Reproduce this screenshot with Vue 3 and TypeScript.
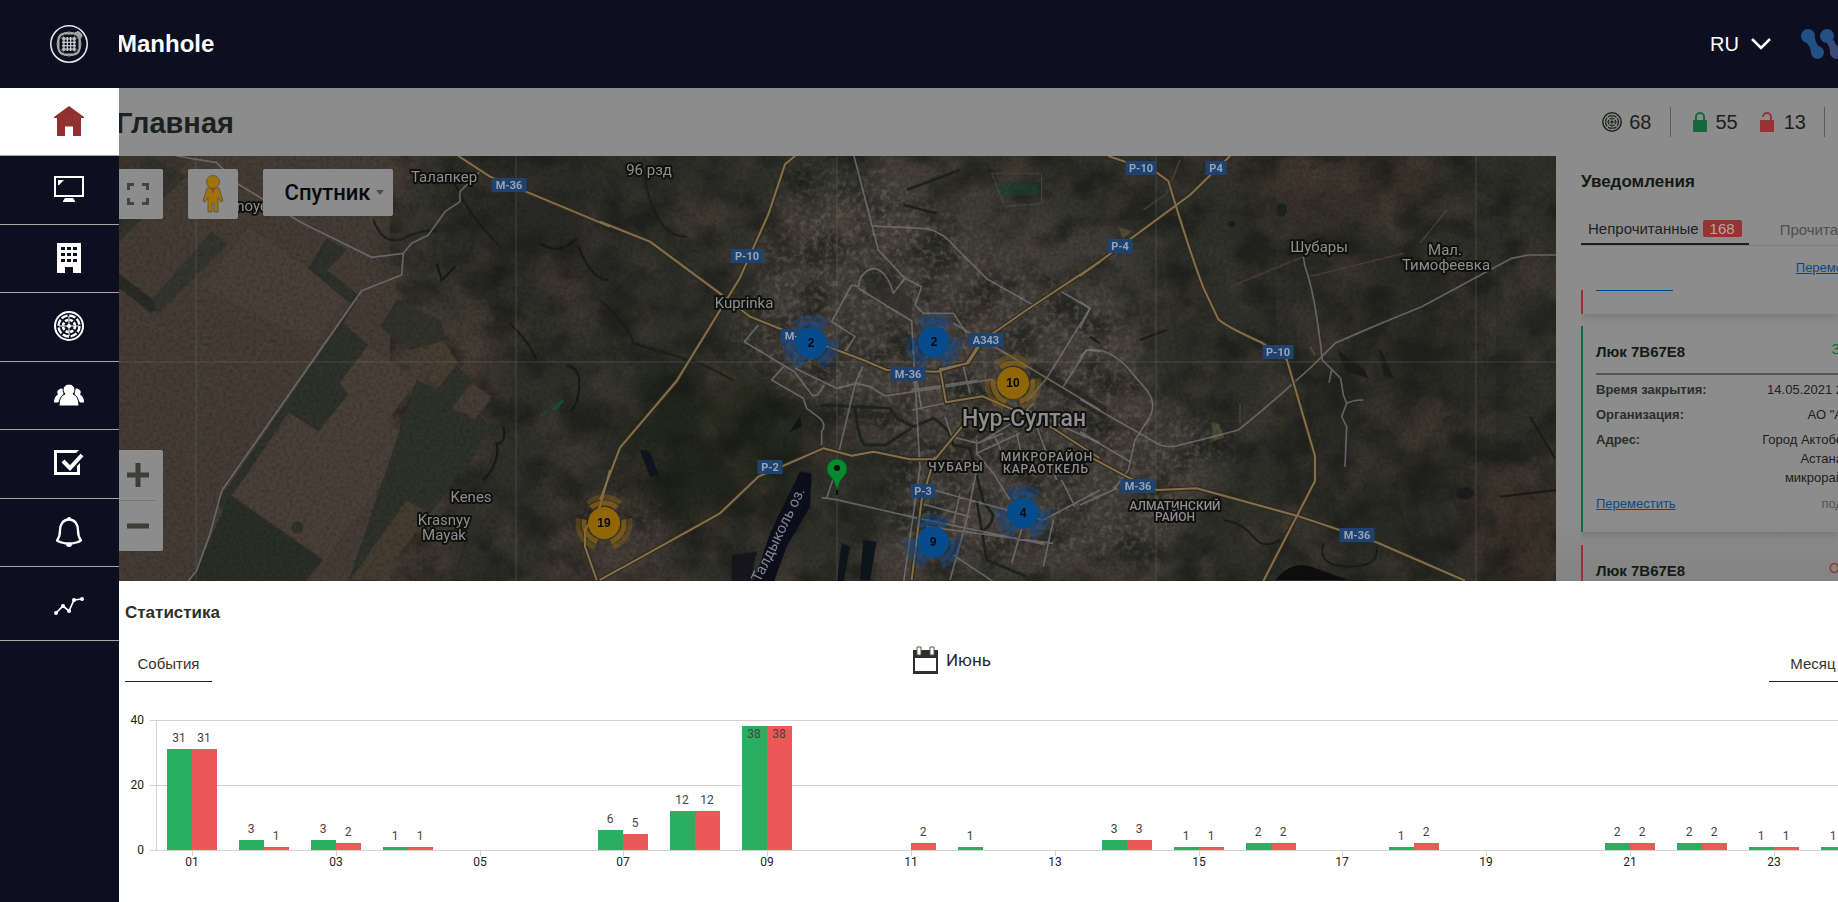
<script setup lang="ts">
interface Shield { x: number; y: number; w: number; t: string }
interface Label { x: number; y: number; t: string; k: string }
interface Cluster { x: number; y: number; n: number; c: string }

const menu: string[] = ['Главная', 'Мониторинг', 'Организации', 'Люки', 'Пользователи', 'Задачи', 'Уведомления', 'Аналитика']

const shields: Shield[] = [
  { x: 509, y: 185, w: 35, t: 'М-36' }, { x: 747, y: 256, w: 33, t: 'Р-10' },
  { x: 798, y: 336, w: 35, t: 'М-36' }, { x: 908, y: 374, w: 35, t: 'М-36' },
  { x: 986, y: 340, w: 35, t: 'А343' }, { x: 770, y: 467, w: 25, t: 'Р-2' },
  { x: 923, y: 491, w: 25, t: 'Р-3' }, { x: 1141, y: 168, w: 31, t: 'Р-10' },
  { x: 1216, y: 168, w: 21, t: 'Р4' }, { x: 1120, y: 246, w: 25, t: 'Р-4' },
  { x: 1278, y: 352, w: 31, t: 'Р-10' }, { x: 1138, y: 486, w: 35, t: 'М-36' },
  { x: 1357, y: 535, w: 35, t: 'М-36' },
]

const labels: Label[] = [
  { x: 444, y: 182, t: 'Талапкер', k: 'town' }, { x: 252, y: 211, t: 'noye', k: 'town' },
  { x: 649, y: 175, t: '96 рзд', k: 'town' }, { x: 744, y: 308, t: 'Kuprinka', k: 'town' },
  { x: 471, y: 502, t: 'Kenes', k: 'town' }, { x: 444, y: 525, t: 'Krasnyy', k: 'town' },
  { x: 444, y: 540, t: 'Mayak', k: 'town' }, { x: 1319, y: 252, t: 'Шубары', k: 'town' },
  { x: 1445, y: 255, t: 'Мал.', k: 'town' }, { x: 1446, y: 270, t: 'Тимофеевка', k: 'town' },
  { x: 1024, y: 426, t: 'Нур-Султан', k: 'city' }, { x: 956, y: 471, t: 'ЧУБАРЫ', k: 'area' },
  { x: 1047, y: 461, t: 'МИКРОРАЙОН', k: 'area' }, { x: 1046, y: 473, t: 'КАРАОТКЕЛЬ', k: 'area' },
  { x: 1175, y: 510, t: 'АЛМАТИНСКИЙ', k: 'area dense' }, { x: 1175, y: 521, t: 'РАЙОН', k: 'area dense' },
]

const clusters: Cluster[] = [
  { x: 811, y: 343, n: 2, c: 'blue' }, { x: 934, y: 342, n: 2, c: 'blue' },
  { x: 1013, y: 383, n: 10, c: 'gold' }, { x: 1023, y: 513, n: 4, c: 'blue' },
  { x: 933, y: 542, n: 9, c: 'blue' }, { x: 604, y: 523, n: 19, c: 'gold' },
]

/* [day, closed, opened] */
const days: [number, number, number][] = [
  [1, 31, 31], [2, 3, 1], [3, 3, 2], [4, 1, 1], [7, 6, 5], [8, 12, 12], [9, 38, 38], [11, 0, 2],
  [12, 1, 0], [14, 3, 3], [15, 1, 1], [16, 2, 2], [18, 1, 2], [21, 2, 2], [22, 2, 2], [23, 1, 1], [24, 1, 0],
]
const band = 72
const base = 140
const scale = 130 / 40
const centre = (d: number): number => 79 + Math.round((d - 1) * 71.9)
const bars = days.flatMap(([d, a, b]) => [
  { x: centre(d) - 25, v: a, c: 'closed' },
  { x: centre(d), v: b, c: 'opened' },
]).filter(o => o.v > 0).map(o => {
  const h = Math.round(o.v * scale)
  return { ...o, h, y: base - h, ty: o.v > 35 ? base - h + 12 : base - h - 7 }
})
const ticks = Array.from({ length: 12 }, (_, i) => ({ x: centre(i * 2 + 1), t: String(i * 2 + 1).padStart(2, '0') }))
const levels = [{ y: 10, t: 40 }, { y: 75, t: 20 }, { y: 140, t: 0 }]
const plotLeft = 79 - band / 2
</script>

<template>
  <div class="app">
    <aside class="side">
      <a class="brand" href="#" aria-label="Manhole">
        <svg width="40" height="40" viewBox="0 0 40 40" fill="none" stroke="#e4e4e4">
          <circle cx="20" cy="20" r="18.2" stroke-width="1.600" />
          <g stroke="#a9a9a6">
            <rect x="9.500" y="9.500" width="21" height="21" rx="6" stroke-width="2" />
            <circle cx="20" cy="20" r="12" stroke-width="1" />
            <path d="M26 8.500a6 6 0 0 1 6 6M28 7.500a7 7 0 0 1 5 5" stroke-width="1.500" />
            <path d="M9 14h22M9 26h22M14 9v22M26 9v22" stroke-width=".7" />
          </g>
          <path d="M13 15h14M13 18.300h14M13 21.700h14M13 25h14M15 13v14M18.300 13v14M21.700 13v14M25 13v14" stroke-width="1.100" />
        </svg>
      </a>
      <nav aria-label="Меню">
        <ul>
          <li v-for="(m, i) in menu" :key="m" :class="{ active: i === 0 }">
            <a href="#" :aria-label="m">
              <svg width="30" height="30" viewBox="0 0 30 30" fill="#fff">
                <g v-if="i === 0" fill="#8e2f30">
                  <path d="M15 0 30 11v1h-3v18h-8v-9.500h-8V30H3V12H0v-1z" />
                  <g fill="#e5484a"><circle v-for="k in 14" :key="k" :cx="5 + (k * 7) % 20" :cy="8 + (k * 5) % 12" r=".5" /><circle cx="6" cy="25" r=".5" /><circle cx="24" cy="25" r=".5" /></g>
                </g>
                <template v-else-if="i === 1">
                  <path fill-rule="evenodd" d="M0 2h30v21H0zM2 4v17h26V4z" />
                  <path d="M4 6h6l-5 5H4zM11 24h8l2 3v1H9v-1z" />
                </template>
                <path v-else-if="i === 2" fill-rule="evenodd" d="M3 0h24v30h-8v-6h-8v6H3zM7 4v3h4V4zm6 0v3h4V4zm6 0v3h4V4zM7 10v3h4v-3zm6 0v3h4v-3zm6 0v3h4v-3zM7 16v3h4v-3zm6 0v3h4v-3zm6 0v3h4v-3z" />
                <g v-else-if="i === 3" fill="none" stroke="#fff">
                  <circle cx="15" cy="15" r="14" stroke-width="2" />
                  <circle cx="15" cy="15" r="10.500" stroke-width="2.400" stroke-dasharray="6.500 1.740" />
                  <circle cx="15" cy="15" r="6" stroke-width="2.600" stroke-dasharray="3.300 1.400" />
                  <circle cx="15" cy="15" r="2" fill="#fff" stroke="none" />
                  <path d="M15 5v20M5 15h20" stroke-width="1" />
                </g>
                <template v-else-if="i === 4">
                  <path d="M5 9.500a4 4 0 0 1 5 0l-1 6-5 7H0q0-6 4-8-2-3 1-5zM25 9.500a4 4 0 0 0-5 0l1 6 5 7h4q0-6-4-8 2-3-1-5z" />
                  <path d="M5 26q0-10 6-12-2-2-2-4a6 6 0 0 1 12 0q0 2-2 4 6 2 6 12z" stroke="#0d0f21" />
                </template>
                <template v-else-if="i === 5">
                  <path d="M0 2h25l-3 3H3v19h20v-6l3-3v12H0z" />
                  <path d="m9 13 7 7L28 7" fill="none" stroke="#fff" stroke-width="4" />
                </template>
                <template v-else-if="i === 6">
                  <path d="M15 2.500c6 0 9 5 9 11q0 6 3 10-5 3-12 3t-12-3q3-4 3-10c0-6 3-11 9-11z" fill="none" stroke="#fff" stroke-width="2.300" stroke-linejoin="round" />
                  <path d="M13 2a2 2 0 0 1 4 0zM12 27h6a3 3 0 0 1-6 0z" />
                </template>
                <template v-else>
                  <path d="m2 25 7-7 6 5 5-11 8-1" fill="none" stroke="#fff" stroke-width="1.700" />
                  <circle cx="2" cy="25" r="2" /><circle cx="9" cy="18" r="2" /><circle cx="15" cy="23" r="2" /><circle cx="20" cy="12" r="2" /><circle cx="28" cy="11" r="2" />
                </template>
              </svg>
            </a>
          </li>
        </ul>
      </nav>
    </aside>

    <div class="page">
      <header class="top">
        <strong class="name">Manhole</strong>
        <button class="lang" type="button">
          RU
          <svg width="20" height="12" viewBox="0 0 20 12" fill="none" stroke="#fff" stroke-width="2.500"><path d="m1 1 9 9 9-9" /></svg>
        </button>
        <svg class="partner" width="37" height="32" viewBox="0 0 37 32" fill="#225084">
          <circle cx="7" cy="8" r="7" /><circle cx="16.500" cy="24.500" r="6.500" /><path d="M3 13q6 3 7.500 13L22 21q-7-3-8-11z" />
          <circle cx="26" cy="8" r="7" /><g fill="#384a78"><circle cx="35.500" cy="24.500" r="6.500" /><path d="M25 14q4 4 4.500 12L41 21q-7-3-8-9z" /></g>
        </svg>
      </header>

      <section class="bar">
        <h1>Главная</h1>
        <div class="totals">
          <span class="total">
            <svg width="20" height="20" viewBox="0 0 20 20" fill="none" stroke="#20251f">
              <circle cx="10" cy="10" r="9.200" stroke-width="1.500" /><circle cx="10" cy="10" r="6.500" stroke-width="1.300" stroke-dasharray="4 1.100" />
              <circle cx="10" cy="10" r="3.700" stroke-width="1.300" stroke-dasharray="2 .9" /><circle cx="10" cy="10" r="1.200" fill="#20251f" stroke="none" /><path d="M10 3v14M3 10h14" stroke-width=".7" />
            </svg>68
          </span>
          <span class="total split">
            <svg width="14" height="20" viewBox="0 0 14 20"><path d="M3 9V5a4 4 0 0 1 8 0v4" fill="none" stroke="#17683a" stroke-width="2" /><path d="M0 8h14v12H0z" fill="#17683a" /></svg>55
          </span>
          <span class="total open">
            <svg width="14" height="20" viewBox="0 0 14 20"><path d="M3 5a4 4 0 0 1 8 0v4" fill="none" stroke="#963334" stroke-width="2" /><path d="M0 8h14v12H0z" fill="#963334" /></svg>13
          </span>
          <span class="rule"></span>
        </div>
      </section>

      <div class="work">
        <section class="map" aria-label="Карта">
          <svg class="terrain" viewBox="113 156 1443 425" preserveAspectRatio="xMinYMin slice">
            <defs>
              <filter id="soft" x="-20%" y="-20%" width="140%" height="140%"><feGaussianBlur stdDeviation="14" /></filter>
              <filter id="edge"><feGaussianBlur stdDeviation="2" /></filter>
              <filter id="shade" x="0" y="0" width="100%" height="100%" color-interpolation-filters="sRGB"><feTurbulence type="fractalNoise" baseFrequency=".025 .03" numOctaves="6" seed="8" /><feColorMatrix values="0 0 0 0 .09  0 0 0 0 .1  0 0 0 0 .085  3 0 0 0 -1.300" /></filter>
              <filter id="earth" x="0" y="0" width="100%" height="100%" color-interpolation-filters="sRGB"><feTurbulence type="fractalNoise" baseFrequency=".02" numOctaves="6" seed="31" /><feColorMatrix values="0 0 0 0 .34  0 0 0 0 .28  0 0 0 0 .24  0 3 0 0 -1.350" /></filter>
              <filter id="grain" x="0" y="0" width="100%" height="100%" color-interpolation-filters="sRGB"><feTurbulence type="fractalNoise" baseFrequency=".16" numOctaves="4" seed="3" /><feColorMatrix values="0 0 0 0 .44  0 0 0 0 .41  0 0 0 0 .37  0 0 3 0 -1.350" /></filter>
              <filter id="dust" x="0" y="0" width="100%" height="100%" color-interpolation-filters="sRGB"><feTurbulence type="fractalNoise" baseFrequency=".3" numOctaves="2" seed="12" /><feColorMatrix values="0 0 0 0 .08  0 0 0 0 .09  0 0 0 0 .07  2 0 0 0 -.8" /></filter>
              <mask id="urban"><g filter="url(#soft)" fill="#fff"><path d="M770 240 890 170 1000 260 1120 300 1150 400 1240 440 1180 500 1160 560 880 570 900 450 730 350z" opacity=".75" /><ellipse cx="620" cy="530" rx="50" ry="40" opacity=".4" /><path d="M780 160h120l40 90-160 10z" opacity=".5" /></g></mask>
            </defs>
            <rect x="113" y="156" width="1443" height="425" fill="#2f302a" />
            <g filter="url(#soft)">
              <path d="M80 120h360l-60 140 120 90-80 260H80z" fill="#453d34" />
              <path d="M480 140h80l70 110-60 60-120-40z" fill="#2a2c26" />
              <path d="M760 220 900 150 1140 240 1160 420 1230 460 1160 580H860l60-110-160-100z" fill="#413c39" />
              <path d="M1150 140h290v70l-130 20z" fill="#37322b" />
              <path d="M1400 480h160v110h-120z" fill="#3a322a" />
              <path d="M560 480h130l-30 110h-120z" fill="#3e3933" />
              <path d="M1290 250h190v330h-180z" fill="#262a25" opacity=".7" />
              <path d="M640 370h160v120l-80 60-110-60z" fill="#22261f" />
            </g>
            <rect x="390" y="156" width="1166" height="425" filter="url(#earth)" opacity=".4" />
            <rect x="390" y="156" width="1166" height="425" filter="url(#shade)" opacity=".6" />
            <g mask="url(#urban)"><rect x="113" y="156" width="1443" height="425" filter="url(#grain)" opacity=".7" /></g>
            <!-- fields -->
            <g transform="translate(110 150) scale(.33333)" filter="url(#edge)">
              <path d="M0 18h250L0 280z" fill="#3d362e" />
              <path d="m110 18 120 60L0 300V210z" fill="#2d302a" opacity=".7" />
              <path d="m305 245 50 35-210 210-30-30z" fill="#36352f" />
              <path d="m0 350 130 100 10 30-20 8L0 390z" fill="#2a2c26" />
              <path d="m415 230 300 210-100 140-340-170z" fill="#4b4137" />
              <path d="m650 265 60 35-60 60 100 80-30 20-125-105zM740 450 700 520l75 65-85 110 25 35-90 115-90-60L340 1080l-20-20z" fill="#2d302a" />
              <path d="m775 585 145 105-90 125 75 60-260 355-280-195 180-240 80 50 90-110-25-35z" fill="#4b4138" />
              <path d="m360 1035 280 195-60 70H240z" fill="#2a2e28" />
              <path d="m900 600 100-30 45 70-40 55z" fill="#463c33" />
              <path d="m860 450 130 60 20 60-110 30-90-70z" fill="#30312b" />
              <path d="m920 690 60 30 60-75 45 50-60 80 120 50-60 100-280 370h-90z" fill="#2f312b" />
              <path d="m890 1050 70 40-150 200h-90z" fill="#4b4036" opacity=".8" />
              <path d="m1085 700 60 40-50 70-55-35z" fill="#463c34" />
              <circle cx="562" cy="1132" r="18" fill="#33302a" />
              <path d="M240 430 480 550 400 700M500 460 640 560M0 480l280 110 200 150" fill="none" stroke="#5a4d40" stroke-width="3" opacity=".5" />
              <path d="M1370 645q40 10 38 60-2 50-25 80M1200 520q60 60 80 110M980 340l15 50 40-40M1180 830q10 50-20 50 10 60-40 110M1290 280q60 40 110-15M1405 290q40 100 90 100" fill="none" stroke="#171a15" stroke-width="6" />
              <path d="M790 210q30 80 90 55 60-30 100-20M1030 90q40 100 140 200" fill="none" stroke="#1a1d18" stroke-width="5" />
              <path d="m1325 775 35-30v12l-28 28z" fill="#17523c" /><path d="m1290 798 22-14" stroke="#17523c" stroke-width="4" />
            </g>
            <!-- water -->
            <g transform="translate(600 150) scale(.33333)" filter="url(#edge)">
              <path d="m600 965 35 5-5 100-70 120-40 110h-60l50-150z" fill="#0f111b" />
              <path d="M395 1215l75-10-20 95h-55z" fill="#14171a" />
              <path d="m790 1170 40 5-20 115h-30zM725 1180l25 10-20 110h-20zM120 900l30 5 25 70-25 5zM600 800l5 30-35 15z" fill="#11131a" />
              <path d="M660 765 870 775l20 30 50 25 60-25q50 30 60 80l50 10 40 160 30 40q-10 50-50 50M765 770q10 100 30 115h60l80-50M1130 1050l30 180 120 50" fill="none" stroke="#1f231f" stroke-width="8" />
              <path d="m815 440 120 65v-60l-170-110z" fill="#302e2a" opacity=".7" />
              <path d="m1180 100h135v32l-110 6z" fill="#17483a" opacity=".5" /><path d="M1175 70h150v90l-110 10z" fill="none" stroke="#56503f" stroke-width="4" opacity=".7" />
              <path d="M0 450q90 80 100 130l200 60 100 50M130 60q30 200 130 200" fill="none" stroke="#191d18" stroke-width="5" />
              <path d="m1300 640 220 130v40l-230-130z" fill="#25251f" opacity=".7" />
              <path d="M910 165l100 25M920 120l160-60" stroke="#1d1f1a" stroke-width="7" />
            </g>
            <g transform="translate(1080 150) scale(.33333)" filter="url(#edge)">
              <path d="M585 1290q50-60 110-40l110 40z" fill="#0d100e" />
              <ellipse cx="605" cy="180" rx="16" ry="20" fill="#1f201b" /><ellipse cx="1155" cy="1030" rx="26" ry="18" fill="#1b1e1a" /><ellipse cx="456" cy="222" rx="10" ry="10" fill="#1b1e1a" />
              <path d="m780 610 70 50 10 20-60-20zM900 600l35 80-20-5zM180 570l80-30M30 560l30 20" stroke="#1b1e1a" stroke-width="7" fill="#1b1e1a" />
              <path d="M400 820v50l30-10-15-35zM120 235l30 10-20 15zM690 590l15 25" stroke="#62583f" stroke-width="6" fill="#62583f" opacity=".7" />
              <path d="M1100 180l-80 100M480 760v60M190 180l70-50 40-100" stroke="#5a5040" stroke-width="5" fill="none" opacity=".6" />
              <path d="M430 1110q60 10 90 50t80 10M730 1180q-20 70 80 70 90 0 80-60" stroke="#171a16" stroke-width="5" fill="none" />
              <path d="M450 410l220-90M690 380l280-70" stroke="#463c32" stroke-width="5" fill="none" />
              <path d="m1350 800 75 125M1260 1040l170-20" stroke="#1b1e19" stroke-width="7" />
            </g>
            <rect x="113" y="156" width="1443" height="425" filter="url(#dust)" opacity=".3" />
            <path class="tile" d="M196 156v425M516 156v425M837 156v425M1156 156v425M1476 156v425M113 362h1443" />
            <!-- minor roads -->
            <g class="minor" transform="translate(110 150) scale(.33333)">
              <path d="M200 18 320 38l65 65 190 115 210 104 95-12 25-30 50-25 50-70 45-30v-30l60-60M880 310l-5 65-120 47-420 600-35 130-40 110-25 30" />
            </g>
            <g class="minor" transform="translate(600 150) scale(.33333)">
              <path d="M762 18 835 300l80 85 50 25-20 55 25 25h90l40 60M820 228l160 8q50 10 90 60l90 90 150 85M915 385l-35 45q-20-70-60-75-40 10-45 55l-20-5-60 110 70 45-30 45M475 525l-42 50 150 90 55 72 15-2 20-30M550 650l-35 40 95 55 10 30 40 30q20 20 5 40v40M585 655l125 60 60-15 40 10 45 28 325-50M788 650l-22 50-48 200M775 415l160 98 25 440-50 350-40 90M1060 520l140 80 300 180M1385 425l85 50-130 210-60 70M1500 605l-40-5-70 110M1300 760l-20 20 220 100M950 690l15 90M935 780l220-45M935 720l200-30M1090 650l20 80M1035 800l20 60 80 20 100-60M1130 880l80-30M1130 870v40l50 60 50 80M1130 910l130-60M1250 850l20 90M1310 830l60 160M1180 850l40 90M665 1043l40 5 240 55 390 80M680 1045l20-60 15-5M1000 1020l330 90 170-90M1385 990l40 80M1080 1030l-20 90M1130 960l-30 150-50 180M960 1060l150 40M1270 1120l-35 120M1360 1110l-30 140M980 1130l380 50M1060 1215l60 40 60 40" />
            </g>
            <g class="minor" transform="translate(1080 150) scale(.33333)">
              <path d="M0 748 240 885q30 10 60 0l100-25 75-20q100-80 220-190l70-70q100-45 260-110l270-145 50-10h85M670 320l5 30q30 80 52 280l55 55 8 50 10 25-15 40 15 30-5 120M800 760q20-10 50-10M755 660l-8 38M0 620l20-20q60-10 120 50l60 70q30 40 10 80l-45 70-20 90-45 60-100 45M0 455l30 20-30 60M0 845l150 90M0 1065l110-50" />
            </g>
            <!-- highways -->
            <g v-for="k in ['case', 'line']" :key="k" :class="['high', k]">
              <path transform="translate(110 150) scale(.33333)" d="M1045 18 1140 80l360 150M1500 960l-30 110-45 70v50l35 100" />
              <path transform="translate(600 150) scale(.33333)" d="M0 215l150 60 230 170 70 55 100 40 240 90 70 30 150 5 90-25 35-55M1500 335l-220 145-130 90-45 70-85 17 18 100 110-18 80 35 130 60 140 90M585 18l-30 25-50 150-85 190-190 310-170 200L0 1050M0 1290l360-200 115-110 195-85 85 22 65-12 110 23h75l95-115M1005 920l-40 130-30 240" />
              <path transform="translate(1080 150) scale(.33333)" d="M85 18l145 50 35 25q60 200 105 320l45 95q20 20 130 70l75 50 85 290v75l-155 300M450 18 330 135 0 378M0 905l140 75 90 40 120-5 300 82 240 80 265 115" />
            </g>
            <g class="shields">
              <g v-for="(s, i) in shields" :key="i">
                <rect :x="s.x - s.w / 2" :y="s.y - 7" :width="s.w" height="14" />
                <text :x="s.x" :y="s.y + 4">{{ s.t }}</text>
              </g>
            </g>
            <g class="names">
              <text v-for="l in labels" :key="l.t" :class="l.k" :x="l.x" :y="l.y">{{ l.t }}</text>
              <text class="lake" transform="translate(760 583) rotate(-64)">Талдыколь оз.</text>
            </g>
            <g v-for="(c, i) in clusters" :key="i" :class="['cluster', c.c]" :transform="`translate(${c.x} ${c.y})`">
              <circle r="20" class="ring near" pathLength="360" transform="rotate(-130)" />
              <circle r="26" class="ring far" pathLength="360" transform="rotate(-130)" />
              <circle r="16" class="core" />
              <text y="4">{{ c.n }}</text>
            </g>
            <path d="M837 495v-8" stroke="#0b0d0b" stroke-width="2" />
            <path d="M837 490q-2-9-7-14a10 10 0 1 1 14 0q-5 5-7 14z" fill="#078a2e" stroke="#0c5722" /><circle cx="837" cy="468" r="3" fill="#080a08" />
          </svg>
          <div class="controls">
            <button class="square" type="button" aria-label="Полный экран">
              <svg width="24" height="24" viewBox="0 0 24 24" fill="none" stroke="#42443e" stroke-width="3"><path d="M2.500 8V2.500H8M16 2.500h5.500V8M21.500 16v5.500H16M8 21.500H2.500V16" /></svg>
            </button>
            <button class="square" type="button" aria-label="Просмотр улиц">
              <svg width="22" height="38" viewBox="0 0 22 38" fill="#a1740b" stroke="#5e5849" stroke-width="1"><path d="M5 13h12l4 13-2 1-3-5v15h-4v-9h-2v9H6V22l-3 5-2-1z" /><circle cx="11" cy="7" r="6.500" /><path d="m9 13 2 6 2-6z" fill="#98402a" stroke="none" /></svg>
            </button>
            <button class="type" type="button">Спутник<svg width="8" height="5" viewBox="0 0 8 5"><path d="M0 0h8L4 5z" fill="#4c4c4c" /></svg></button>
          </div>
          <div class="zoom">
            <button type="button" aria-label="Увеличить"><svg width="22" height="24" viewBox="0 0 22 24"><path d="M0 12h22M11 0v24" stroke="#3c3e37" stroke-width="5" /></svg></button>
            <button type="button" aria-label="Уменьшить"><svg width="22" height="6" viewBox="0 0 22 6"><path d="M0 3h22" stroke="#3c3e37" stroke-width="5" /></svg></button>
          </div>
        </section>

        <section class="notes">
          <h2>Уведомления</h2>
          <div class="tabs">
            <button class="tab on" type="button">Непрочитанные <b>168</b></button>
            <button class="tab" type="button">Прочита</button>
          </div>
          <a class="all" href="#">Переме</a>
          <div class="list">
            <article class="card red tail"><i></i></article>
            <article class="card green">
              <header><h3>Люк 7B67E8</h3><span>З</span></header>
              <dl>
                <dt>Время закрытия:</dt><dd>14.05.2021 2</dd>
                <dt>Организация:</dt><dd>АО "А</dd>
                <dt>Адрес:</dt><dd>Город Актобе<br>Астана<br>микрорай</dd>
              </dl>
              <footer><a href="#">Переместить</a><span>под</span></footer>
            </article>
            <article class="card red">
              <header><h3>Люк 7B67E8</h3><span>О</span></header>
            </article>
          </div>
        </section>
      </div>

      <section class="stats">
        <h2>Статистика</h2>
        <div class="filters">
          <button class="pick" type="button">События</button>
          <button class="month" type="button">
            <svg width="25" height="28" viewBox="0 0 25 28"><path d="M0 4h25v24H0z" fill="#2e302b" /><path d="M2 12h21v13H2z" fill="#fff" /><path d="M4 1h4v8H4zM17 1h4v8h-4z" fill="#fff" stroke="#55564f" /></svg>
            Июнь
          </button>
          <button class="pick" type="button">Месяц</button>
        </div>
        <svg class="chart" role="img" aria-label="Статистика">
          <g class="grid">
            <line v-for="l in levels" :key="l.t" :x1="plotLeft - 6" :y1="l.y" x2="100%" :y2="l.y" />
            <line :x1="plotLeft" y1="10" :x2="plotLeft" y2="140" />
            <line v-for="t in ticks" :key="t.t" :x1="t.x" y1="140" :x2="t.x" y2="146" />
          </g>
          <text v-for="l in levels" :key="l.t" class="axis y" :x="plotLeft - 12" :y="l.y + 4">{{ l.t }}</text>
          <text v-for="t in ticks" :key="t.t" class="axis x" :x="t.x" y="156">{{ t.t }}</text>
          <g v-for="(b, i) in bars" :key="i">
            <rect :class="b.c" :x="b.x" :y="b.y" width="25" :height="b.h" />
            <text class="value" :x="b.x + 12" :y="b.ty">{{ b.v }}</text>
          </g>
        </svg>
      </section>
    </div>
  </div>
</template>

<style>
body { margin: 0; overflow: hidden; background: #fff; }
</style>

<style scoped>
.app { display: flex; min-height: 100vh; overflow: hidden; font-family: "Liberation Sans", Arial, sans-serif; color: #1c211d; }
button { border: 0; padding: 0; margin: 0; background: none; font: inherit; color: inherit; cursor: pointer; }
h1, h2, h3, ul, dl, dd { margin: 0; padding: 0; }
svg { display: block; flex: none; }

.side { position: relative; z-index: 2; flex: 0 0 119px; background: #0d0f21; }
.brand { display: flex; align-items: center; height: 88px; padding-left: 49px; }
.side ul { list-style: none; }
.side li { box-sizing: border-box; height: 68px; border-bottom: 1px solid #a8a6a4; }
.side li:nth-child(even) { height: 69px; }
.side li:last-child { height: 74px; }
.side li.active { background: #fff; }
.side li a { display: flex; align-items: center; box-sizing: border-box; height: 100%; padding: 0 0 2px 54px; }

.page { flex: 1; min-width: 0; margin-left: -6px; overflow: hidden; }
.top { display: flex; align-items: center; height: 88px; padding-left: 4px; background: #0d0f21; color: #fff; }
.name { font-size: 24px; margin-right: auto; }
.lang { display: flex; align-items: center; gap: 12px; font-size: 20px; margin-right: 30px; }
.partner { overflow: hidden; }

.bar { display: flex; align-items: center; justify-content: space-between; height: 68px; padding-left: 3px; background: #8c8c8c; }
h1 { font-size: 29px; padding-top: 2px; }
.totals { display: flex; align-items: center; font-size: 20px; padding-right: 13px; }
.total { display: flex; align-items: center; gap: 7px; height: 30px; }
.total.split { gap: 9px; border-left: 1px solid #5c5b58; margin-left: 18px; padding-left: 22px; }
.total.open { gap: 10px; margin-left: 22px; }
.rule { width: 1px; height: 30px; margin-left: 18px; background: #5c5b58; }

.work { display: flex; height: 425px; overflow: hidden; background: #8c8c8c; }
.map { position: relative; flex: 1; min-width: 0; overflow: hidden; }
.terrain { width: 100%; height: 100%; }
.tile { stroke: #777; stroke-opacity: .35; fill: none; }
.minor { fill: none; stroke: #77757a; stroke-width: 5; stroke-opacity: .75; stroke-linejoin: round; }
.high { fill: none; stroke-linejoin: round; }
.high.case { stroke: #33291a; stroke-width: 13; }
.high.line { stroke: #80704f; stroke-width: 6; }
.shields rect { fill: #20426f; }
.shields text { fill: #97a3b4; font: 700 11px Roboto, sans-serif; text-anchor: middle; }
.names text { fill: #8e8e8e; stroke: #10110f; stroke-width: 4px; paint-order: stroke; stroke-linejoin: round; text-anchor: middle; font-family: Roboto, sans-serif; }
.names .town { font-size: 15px; }
.names .city { font-size: 23px; font-weight: 500; }
.names .area { font-size: 12px; font-weight: 500; letter-spacing: 1px; }
.names .area.dense { font-size: 12px; letter-spacing: 0; }
.names .lake { font-size: 15px; text-anchor: start; stroke: none; fill: #7f8694; }
.cluster text { fill: #060a10; text-anchor: middle; font: 700 12px "Liberation Sans", sans-serif; }
.cluster .ring { fill: none; stroke-dasharray: 80 40; }
.cluster .near { stroke-width: 5; opacity: .7; }
.cluster .far { stroke-width: 5; opacity: .4; }
.blue .core { fill: #064b8b; }
.blue .ring { stroke: #17498a; }
.gold .core { fill: #916605; }
.gold .ring { stroke: #8f6616; }

.controls { position: absolute; top: 13px; left: 0; display: flex; align-items: flex-start; gap: 25px; }
.square { display: flex; align-items: center; justify-content: center; width: 50px; height: 50px; border-radius: 2px; background: #8c8c8c; }
.type { display: flex; align-items: center; justify-content: center; gap: 6px; width: 130px; height: 47px; padding-left: 13px; border-radius: 2px; background: #8c8c8c; font: 500 22px Roboto, sans-serif; color: #060b0a; box-sizing: border-box; }
.zoom { position: absolute; left: 0; bottom: 30px; width: 50px; height: 101px; border-radius: 2px; background: #8c8c8c; }
.zoom button { display: flex; align-items: center; justify-content: center; height: 50px; width: 50px; }
.zoom button + button { border-top: 1px solid #777; width: 36px; margin: 0 7px; }

.notes { flex: 0 0 282px; box-sizing: border-box; padding-left: 25px; overflow: hidden; background: linear-gradient(#8c8c8c 85%, #838383); }
h2 { font-size: 17px; line-height: 20px; }
.notes h2 { padding-top: 16px; color: #141a15; }
.tabs { display: flex; gap: 24px; margin-top: 21px; border-bottom: 1px solid #7f7f7f; font-size: 15px; }
.tab { display: flex; align-items: center; gap: 4px; height: 32px; padding: 0 7px; color: #4f504d; white-space: nowrap; }
.tab.on { color: #1d231f; border-bottom: 2px solid #1b211c; margin-bottom: -1px; }
.tab b { padding: 0 7px; border-radius: 2px; background: #963434; color: #b5a6a2; font-weight: 400; line-height: 17px; }
.all { display: block; margin: 13px -5px 0 0; font-size: 13px; line-height: 17px; text-align: right; }
.notes a { color: #0b4a86; text-decoration: underline; }
.list { margin-top: 14px; height: 292px; overflow: hidden; }
.card { box-sizing: border-box; padding: 0 0 0 13px; border-left: 2px solid; margin-bottom: 13px; box-shadow: 0 4px 7px rgba(0, 0, 0, .13); font-size: 13px; line-height: 19px; }
.card.red { border-color: #963434; }
.card.green { border-color: #17683a; height: 206px; }
.card.tail { height: 24px; margin-bottom: 12px; }
.card i { display: block; width: 77px; height: 1px; background: #0b4a86; }
.card header { display: flex; justify-content: space-between; align-items: flex-start; height: 49px; padding-top: 16px; box-sizing: border-box; }
.card.green header { border-bottom: 2px solid #56554f; }
.card h3 { font-size: 15px; line-height: 20px; color: #141a15; }
.card header span { font-size: 14px; line-height: 14px; color: #963434; margin-right: -2px; }
.card.green header span { color: #17683a; }
.card dl { display: grid; grid-template-columns: auto 1fr; row-gap: 6px; padding-top: 5px; }
.card dt { font-weight: 700; color: #2a2f2a; }
.card dd { text-align: right; white-space: nowrap; margin-right: -5px; }
.card footer { display: flex; justify-content: space-between; margin: 7px -5px 0 0; }
.card footer span { color: #555450; }

.stats { padding: 22px 0 0 12px; background: #fff; }
.stats h2 { color: #2c2f2a; }
.filters { display: grid; grid-template-columns: minmax(0, 46fr) minmax(0, 50fr) minmax(0, 4fr); align-items: start; justify-items: start; margin-top: 19px; height: 68px; }
.filters > * { white-space: nowrap; }
.pick { height: 40px; padding: 4px 12px 0; border-bottom: 1px solid #222; font-size: 15px; color: #333; box-sizing: border-box; }
.filters .pick { width: 87px; }
.month { display: flex; align-items: center; gap: 8px; margin-top: 4px; font: 17px Roboto, sans-serif; color: #25282a; }
.chart { width: calc(100% + 12px); height: 170px; margin-left: -12px; }
.grid line { stroke: #d2d2d2; stroke-width: 1; shape-rendering: crispEdges; }
.axis { font: 12px Roboto, sans-serif; fill: #222; }
.axis.y { text-anchor: end; }
.axis.x, .value { text-anchor: middle; }
.value { font: 12px Roboto, sans-serif; fill: #444; }
.closed { fill: #29af61; }
.opened { fill: #ec5757; }
</style>
